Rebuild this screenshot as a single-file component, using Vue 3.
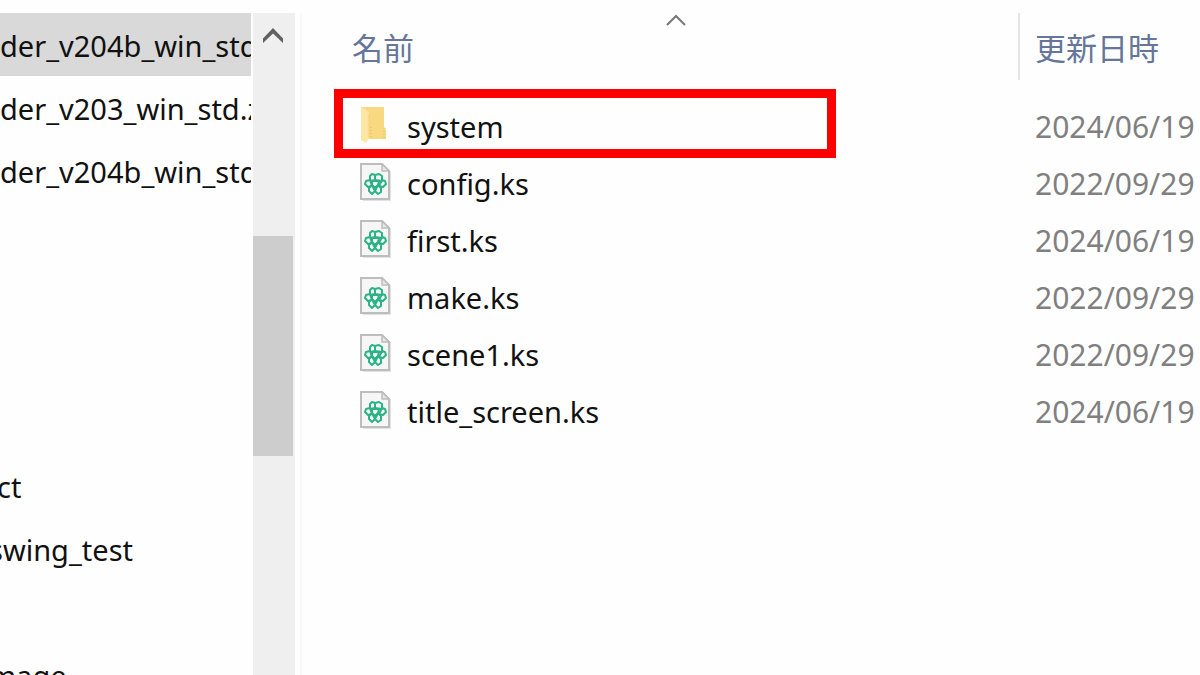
<script setup>
const folders = [
  { label: 'der_v204b_win_std', selected: true },
  { label: 'der_v203_win_std.zip' },
  { label: 'der_v204b_win_std' },
  { label: '' },
  { label: '' },
  { label: '' },
  { label: '' },
  { label: 'ct', level: 'shallow' },
  { label: 'swing_test', level: 'deep' },
  { label: '' },
  { label: 'mage', level: 'deep' },
]
const files = [
  { name: 'system', date: '2024/06/19', folder: true },
  { name: 'config.ks', date: '2022/09/29' },
  { name: 'first.ks', date: '2024/06/19' },
  { name: 'make.ks', date: '2022/09/29' },
  { name: 'scene1.ks', date: '2022/09/29' },
  { name: 'title_screen.ks', date: '2024/06/19' },
]
</script>

<template>
  <div class="explorer">
    <nav class="tree" aria-label="Folders">
      <template v-for="(f, i) in folders" :key="i">
        <button v-if="f.label" class="node" :class="[f.level, { selected: f.selected }]">{{ f.label }}</button>
        <div v-else class="node"></div>
      </template>
    </nav>
    <div class="scrollbar">
      <button class="scroll-up" aria-label="Scroll up">
        <svg width="20" height="16" viewBox="0 0 20 16"><path d="M0 15V10.500L10 0L20 10.500V15L10 5.500Z" fill="#606060" /></svg>
      </button>
      <div class="thumb"></div>
    </div>
    <main class="content">
      <table>
        <thead>
          <tr>
            <th class="name-col" scope="col">
              名前
              <svg class="sort" width="20" height="12" viewBox="0 0 20 12"><path d="M1 11L10 2L19 11" fill="none" stroke="#777" stroke-width="2" /></svg>
            </th>
            <th class="date-col" scope="col">更新日時</th>
          </tr>
        </thead>
        <tbody>
          <tr v-for="file in files" :key="file.name">
            <td class="name-cell">
              <div class="file">
                <svg v-if="file.folder" class="icon" width="32" height="38" viewBox="0 0 32 38">
                  <path d="M1 1H24V21L26 23V33H7L1 30Z" fill="#f8d880" />
                  <path d="M1 1L8 5Q9 6 9 8V32L6 37L1 34Z" fill="#ffe7a3" />
                  <path d="M9 8V32" stroke="#f4cf74" fill="none" />
                  <path d="M11 21V31M24 22V32" stroke="#e6b85c" stroke-dasharray="1 2" fill="none" />
                </svg>
                <svg v-else class="icon" width="32" height="38" viewBox="0 0 32 38">
                  <path d="M3 2H24L31 9V38H3Z" fill="#e2e2e2" />
                  <path d="M1 1H22L29 8V36H1Z" fill="#f6f6f6" stroke="#bdbdbd" stroke-width="2" />
                  <path d="M22 1V8H29Z" fill="#e6e6e6" stroke="#bdbdbd" stroke-width="1.500" />
                  <g fill="none" stroke="#2bb385" stroke-width="2" stroke-linejoin="round">
                    <path d="M10 18V13L12 11L15 12V17L10 18M15 12L19 11L22 13V18L15 17" />
                    <path d="M10 17L6 18L5 21L8 24L12 23L10 17M22 17L25 18L26 21L23 24L19 23L22 17" />
                    <path d="M12 22L9 25V28L12 31L15 28L12 22M18 22L21 25V29L18 31L15 28L18 22" />
                    <path d="M12 18H19L18 22L15 25L12 22Z" />
                  </g>
                </svg>
                <span>{{ file.name }}</span>
              </div>
              <div v-if="file.folder" class="highlight"></div>
            </td>
            <td class="date-cell">{{ file.date }}</td>
          </tr>
        </tbody>
      </table>
    </main>
  </div>
</template>

<style>
body { margin: 0; overflow: hidden; background: #fefefe; }
</style>
<style scoped>
.explorer {
  display: flex;
  box-sizing: border-box;
  height: 100vh;
  padding-top: 13px;
  overflow: hidden;
  font-family: "Noto Sans", "Noto Sans CJK JP", sans-serif;
  font-size: 29px;
  color: #111;
}
button { border: 0; padding: 0; background: none; font: inherit; color: inherit; }
.tree { flex: 0 0 251px; overflow: hidden; }
.node {
  display: block;
  box-sizing: border-box;
  width: 100%;
  height: 63px;
  padding-top: 2px;
  overflow: hidden;
  text-align: left;
  white-space: nowrap;
}
.selected { background: #d9d9d9; }
.shallow { text-indent: -3px; }
.deep { text-indent: -11px; }
.scrollbar { flex: 0 0 42px; margin-left: 2px; background: #efefef; }
.scroll-up { display: flex; justify-content: center; width: 40px; height: 223px; padding-top: 15px; }
.thumb { width: 40px; height: 220px; background: #cdcdcd; }
.content { flex: 1; min-width: 0; margin-left: 5px; padding-left: 32px; border-left: 2px solid #f7f7f7; }
table { width: 100%; table-layout: fixed; border-collapse: separate; border-spacing: 0; }
th {
  position: relative;
  height: 67px;
  padding: 0 0 0 18px;
  box-sizing: border-box;
  text-align: left;
  font-family: "Noto Sans CJK JP", sans-serif;
  font-weight: 400;
  font-size: 31px;
  line-height: 40px;
  color: #65769a;
}
.date-col { width: 182px; padding-left: 15px; border-left: 2px solid #e4e4e4; white-space: nowrap; }
.sort { position: absolute; top: 1px; left: 50%; transform: translateX(-50%); }
tbody::before { content: ""; display: block; height: 18px; }
td { position: relative; height: 57px; padding: 0; white-space: nowrap; line-height: 40px; }
.file { display: flex; align-items: center; gap: 15px; padding-left: 26px; }
.icon { flex: none; margin-bottom: 4px; }
.date-cell { padding-left: 17px; font-size: 30px; color: #808080; }
.highlight { position: absolute; top: -9px; bottom: -3px; left: 0; width: 502px; box-sizing: border-box; border: 9px solid #f00; }
</style>
